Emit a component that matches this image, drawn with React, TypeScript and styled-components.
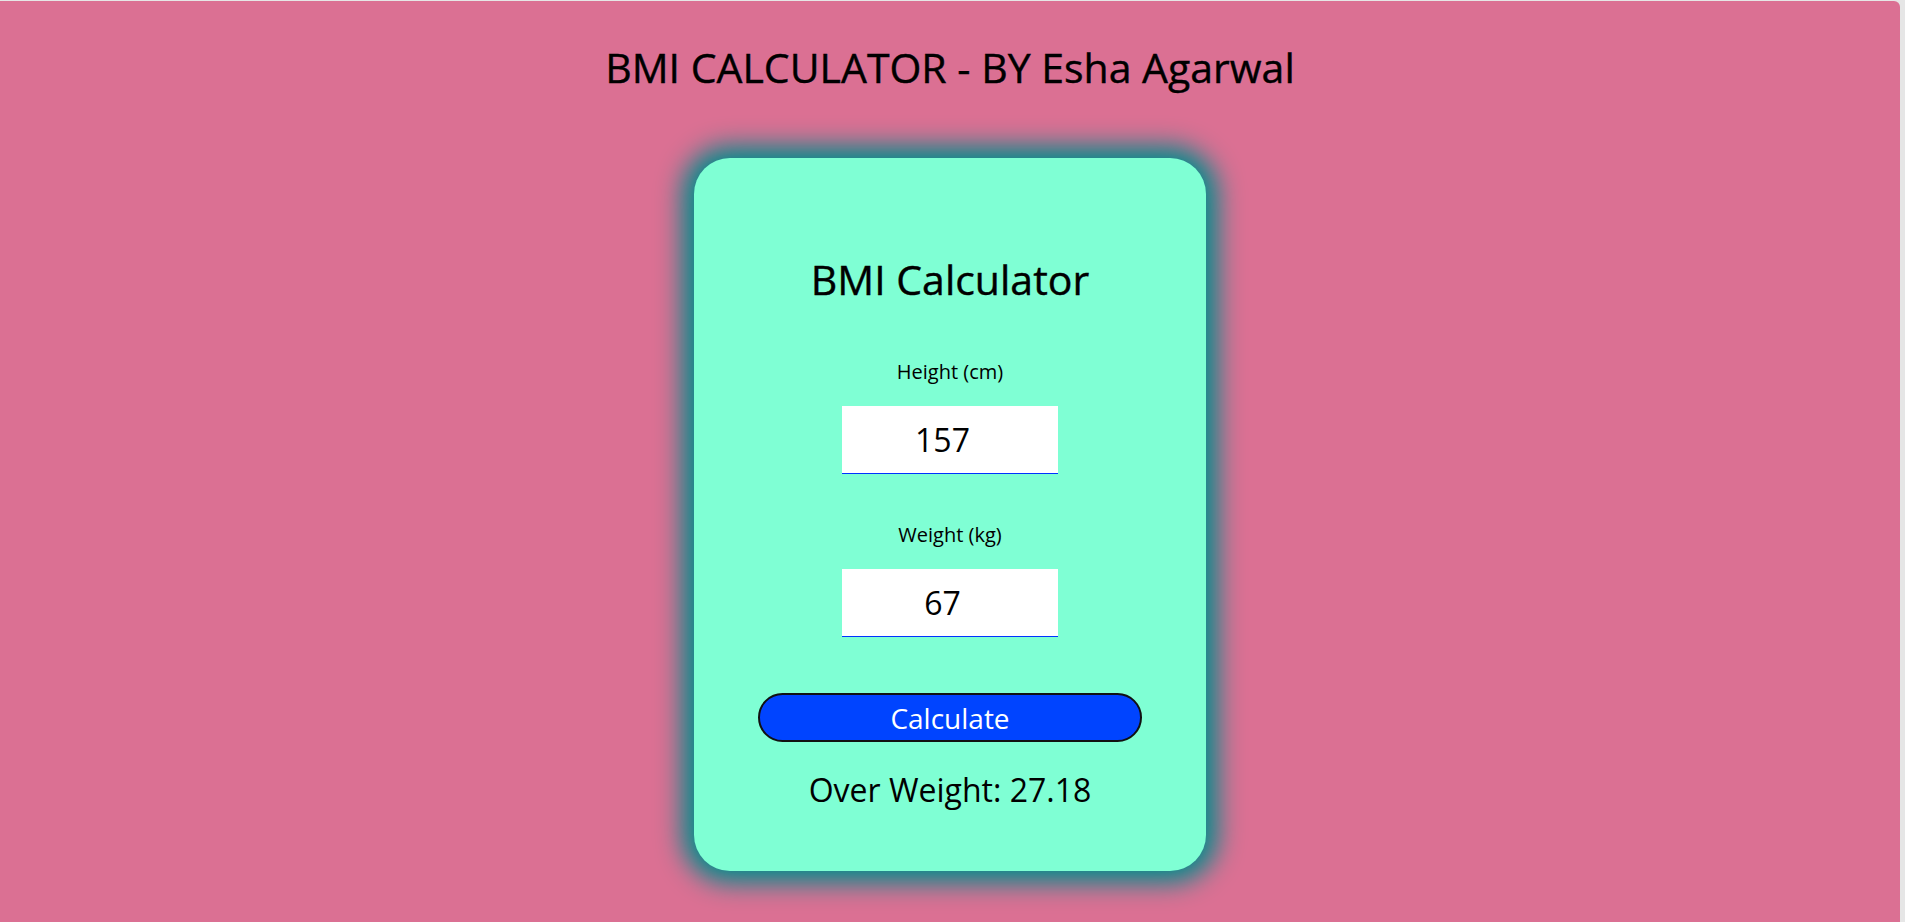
import React, { useState } from "react";
import styled, { createGlobalStyle } from "styled-components";

const Global = createGlobalStyle`
  html, body {
    margin: 0;
    padding: 0;
    background: #e6e6e6;
    font-family: "Open Sans", "Noto Sans", sans-serif;
  }
  * { box-sizing: border-box; }
  input[type=number]::-webkit-inner-spin-button,
  input[type=number]::-webkit-outer-spin-button {
    opacity: 0;
  }
`;

const Page = styled.div`
  margin-top: 1px;
  width: calc(100% - 5px);
  min-height: calc(100vh - 1px);
  background: #db7093;
  border-top-right-radius: 6px;
  display: flex;
  flex-direction: column;
  align-items: center;
  padding-top: 42px;
  padding-bottom: 40px;
`;

const Heading = styled.h1`
  margin: 0;
  font-size: 41px;
  line-height: 48px;
  font-weight: 400;
  -webkit-text-stroke: 0.4px #000;
  color: #000;
`;

const Card = styled.div`
  margin-top: 67px;
  width: 512px;
  background: #7fffd4;
  border-radius: 36px;
  box-shadow: 0 0 26px 12px rgb(0, 139, 139);
  display: flex;
  flex-direction: column;
  align-items: center;
  padding: 99px 0 61px;
`;

const CardTitle = styled.h2`
  margin: 0;
  font-size: 41px;
  line-height: 44px;
  font-weight: 400;
  -webkit-text-stroke: 0.4px #000;
  color: #000;
`;

const Field = styled.div<{ $first?: boolean }>`
  display: flex;
  flex-direction: column;
  align-items: center;
  margin-top: ${(p) => (p.$first ? "59px" : "49px")};
`;

const Label = styled.label`
  font-size: 20px;
  line-height: 24px;
  color: #000;
`;

const NumberInput = styled.input`
  margin-top: 22px;
  width: 216px;
  height: 68px;
  border: none;
  border-bottom: 1px solid #0033ff;
  background: #fff;
  outline: none;
  text-align: center;
  font-family: "Open Sans", "Noto Sans", sans-serif;
  font-size: 32px;
  color: #000;
  padding: 0;
`;

const Button = styled.button`
  margin-top: 56px;
  width: 384px;
  height: 49px;
  border-radius: 25px;
  border: 2px solid #111;
  background: #0044ff;
  color: #fff;
  font-family: "Open Sans", "Noto Sans", sans-serif;
  font-size: 28px;
  line-height: 1;
  cursor: pointer;
  padding: 0;
`;

const Result = styled.p`
  margin: 28px 0 0;
  font-size: 32px;
  line-height: 40px;
  color: #000;
`;

export default function App() {
  const [height, setHeight] = useState("157");
  const [weight, setWeight] = useState("67");
  const [result, setResult] = useState("Over Weight: 27.18");

  const calc = () => {
    const h = parseFloat(height) / 100;
    const w = parseFloat(weight);
    if (!h || !w) return;
    const bmi = w / (h * h);
    let cat = "Normal";
    if (bmi < 18.5) cat = "Under Weight";
    else if (bmi >= 25) cat = "Over Weight";
    setResult(`${cat}: ${bmi.toFixed(2)}`);
  };

  return (
    <>
      <Global />
      <Page>
        <Heading>BMI CALCULATOR - BY Esha Agarwal</Heading>
        <Card>
          <CardTitle>BMI Calculator</CardTitle>
          <Field $first>
            <Label>Height (cm)</Label>
            <NumberInput
              type="number"
              value={height}
              onChange={(e) => setHeight(e.target.value)}
            />
          </Field>
          <Field>
            <Label>Weight (kg)</Label>
            <NumberInput
              type="number"
              value={weight}
              onChange={(e) => setWeight(e.target.value)}
            />
          </Field>
          <Button onClick={calc}>Calculate</Button>
          <Result>{result}</Result>
        </Card>
      </Page>
    </>
  );
}
